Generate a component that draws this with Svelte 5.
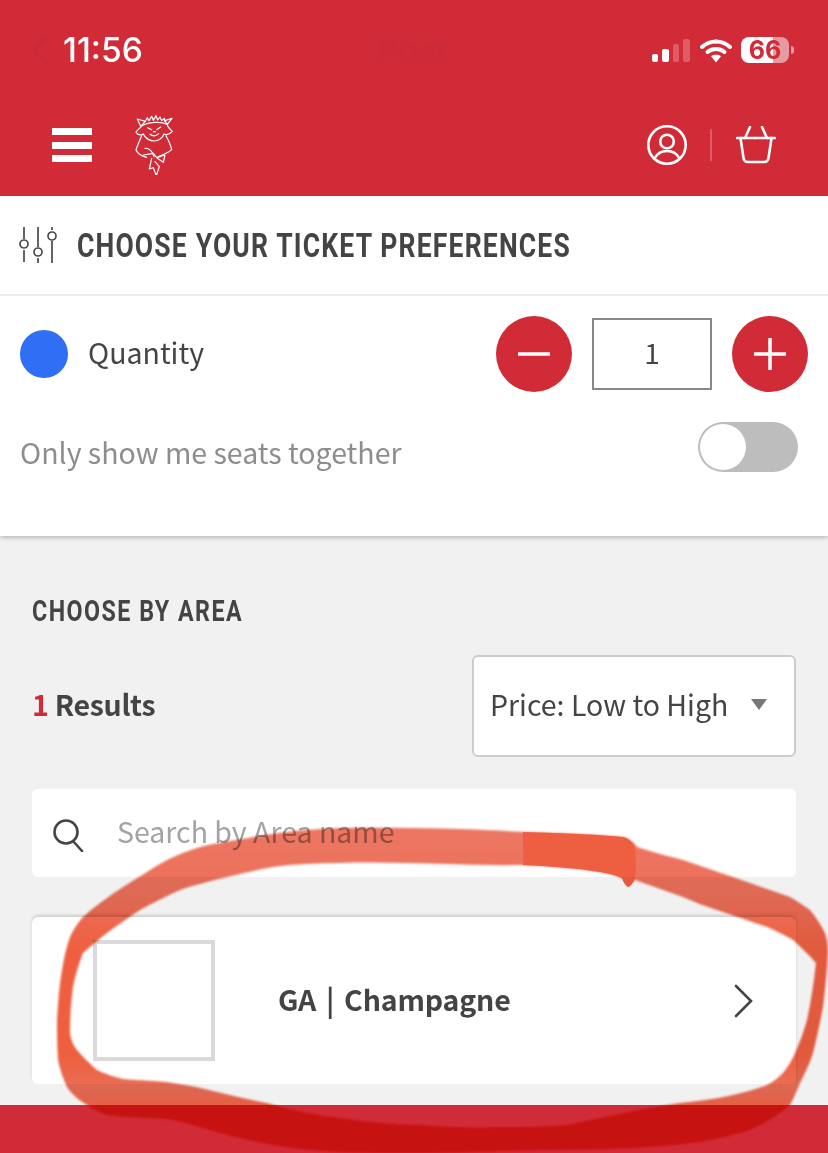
<script>
  let quantity = $state(1);
  let together = $state(false);
</script>

<div class="page">
  <header class="top">
    <div class="status">
      <div class="status-left">
        <svg class="ghost-back" width="18" height="30" viewBox="0 0 18 30"><path d="M15 3 3 15l12 12" fill="none" stroke="#c92b38" stroke-width="4" /></svg>
        <span class="time">11:56</span>
      </div>
      <span class="ghost-title">Post</span>
      <div class="status-right">
        <div class="signal">
          <i class="b1"></i><i class="b2"></i><i class="b3"></i><i class="b4"></i>
        </div>
        <svg class="wifi" width="32" height="25" viewBox="0 0 32 25">
          <path d="M16 3.500C10.500 3.500 5.800 5.600 2 9" fill="none" stroke="#fff" stroke-width="4" stroke-linecap="round" />
          <path d="M16 3.500c5.500 0 10.200 2.100 14 5.500" fill="none" stroke="#fff" stroke-width="4" stroke-linecap="round" />
          <path d="M7.500 14c2.400-2 5.200-3 8.500-3s6.100 1 8.500 3" fill="none" stroke="#fff" stroke-width="4" stroke-linecap="round" />
          <path d="M11 18.200c1.400-.9 3-1.400 5-1.400s3.600.5 5 1.400L16 24.500z" fill="#fff" />
        </svg>
        <div class="battery"><span class="level">66</span><span class="nub"></span></div>
      </div>
    </div>
    <nav class="nav">
      <div class="nav-left">
        <button class="burger" aria-label="Menu"><i></i><i></i><i></i></button>
        <svg class="logo" width="40" height="60" viewBox="45 30 120 180" fill="none" stroke="#fff" stroke-width="3.600" stroke-linejoin="round" stroke-linecap="round">
          <path d="M52 42 76 49 62 64zM156 40l-14 18-8-11z" />
          <path d="M76 49 82 38l5 9 8-13 5 12 8-14 5 13 7-9 5 11 8-7 1 8" />
          <path d="M64 64C60 70 50 76 48 82c6 8 14 10 22 5 5 13 20 21 32 21 13 0 26-9 30-21 8 4 18 0 25-8-8-7-14-12-15-21-20-9-58-8-78 6z" />
          <path d="M83 68l12 6M122 66l-12 8" />
          <path d="M90 88c8 6 18 6 26-2M100 80h6" />
          <path d="M65 92c-6 14-14 32-17 43 6 13 20 19 32 22M138 92c7 13 14 28 17 41-10 12-30 17-40 22" />
          <path d="M70 150l30-5 10 13 25-8-5 22-18-12" />
          <path d="M75 130c10-2 25 10 27 25M95 160l-7 32 12-4 9 24 9-27-13-15" />
        </svg>
      </div>
      <div class="nav-right">
        <svg width="42" height="42" viewBox="0 0 42 42" fill="none" stroke="#fff" stroke-width="2.600">
          <circle cx="21" cy="21" r="18.700" />
          <circle cx="21" cy="17.500" r="6.800" />
          <path d="M8.500 34.500c2.500-5 6.500-7.500 12.500-7.500s10 2.500 12.500 7.500" />
        </svg>
        <span class="sep"></span>
        <svg width="40" height="38" viewBox="0 0 40 38" fill="none" stroke="#fff" stroke-width="2.600" stroke-linecap="round" stroke-linejoin="round">
          <path d="M1 12h38" />
          <path d="M4.500 12l3 20q.6 4 4.500 4h16q3.900 0 4.500-4l3-20" />
          <path d="M14 1l-5 11M26 1l5 11" />
        </svg>
      </div>
    </nav>
  </header>

  <section class="prefs">
    <div class="prefs-title">
      <svg width="38" height="38" viewBox="0 0 38 38" fill="none" stroke="#4a4a4a" stroke-width="1.700">
        <path d="M5 1v12M5 24v12M19 1v20M19 32v5M33 1v3M33 15v22" />
        <circle cx="5" cy="18" r="4" />
        <circle cx="19" cy="26" r="4" />
        <circle cx="33" cy="10" r="4" />
      </svg>
      <h1><span>CHOOSE YOUR TICKET PREFERENCES</span></h1>
    </div>
    <div class="prefs-body">
      <div class="qty-row">
        <span class="dot"></span>
        <span class="qty-label">Quantity</span>
        <div class="stepper">
          <button class="round" aria-label="Less" onclick={() => (quantity = Math.max(1, quantity - 1))}>
            <svg width="34" height="34" viewBox="0 0 34 34"><path d="M1 17h32" stroke="#fff" stroke-width="3.500" /></svg>
          </button>
          <div class="qty-value">{quantity}</div>
          <button class="round" aria-label="More" onclick={() => quantity++}>
            <svg width="34" height="34" viewBox="0 0 34 34"><path d="M1 17h32M17 1v32" stroke="#fff" stroke-width="3.500" /></svg>
          </button>
        </div>
      </div>
      <div class="together-row">
        <span>Only show me seats together</span>
        <button class="toggle" aria-label="Seats together" onclick={() => (together = !together)}><i></i></button>
      </div>
    </div>
  </section>

  <main class="area">
    <h2><span>CHOOSE BY AREA</span></h2>
    <div class="results-row">
      <div class="results"><b>1</b> Results</div>
      <div class="select">
        <span>Price: Low to High</span>
        <i class="caret"></i>
      </div>
    </div>
    <div class="search">
      <svg width="34" height="34" viewBox="0 0 34 34" fill="none" stroke="#444" stroke-width="2.600" stroke-linecap="round">
        <circle cx="14" cy="14" r="11.500" />
        <path d="M21 23l9 10" />
      </svg>
      <span>Search by Area name</span>
    </div>
    <div class="card">
      <div class="thumb"></div>
      <div class="card-name">GA | Champagne</div>
      <svg width="20" height="34" viewBox="0 0 20 34" fill="none" stroke="#444" stroke-width="2.600" stroke-linecap="round"><path d="M2 2l15 15L2 32" /></svg>
    </div>
  </main>

  <footer class="bottom"></footer>

  <!-- marker ring drawn on top of the screenshot -->
  <svg class="scribble" viewBox="0 0 828 1153" width="828" height="1153">
    <defs>
      <linearGradient id="inkFade" gradientUnits="userSpaceOnUse" x1="0" y1="828" x2="0" y2="1153">
        <stop offset="0" stop-color="#ec7763" />
        <stop offset=".2" stop-color="#ec705a" />
        <stop offset=".38" stop-color="#ee5f40" />
        <stop offset=".7" stop-color="#ee5f40" />
        <stop offset=".8" stop-color="#ea6e55" />
        <stop offset=".85" stop-color="#f2664a" />
        <stop offset="1" stop-color="#f2664a" />
      </linearGradient>
    </defs>
    <path class="ink" fill="url(#inkFade)" fill-rule="evenodd" d="M523 832C480 829 410 827 340 828C310 829 280 832 253 837C232 841 213 843 197 848C187 851 177 855 167 860C152 868 138 878 123 887C108 897 95 906 83 917C77 924 73 930 70 937C66 948 64 958 62 970C59 987 58 1003 57 1020C57 1033 57 1047 58 1060C60 1070 63 1079 67 1087C71 1093 77 1099 87 1105C93 1109 100 1113 107 1115C128 1118 150 1117 173 1120C192 1124 209 1130 227 1135C242 1139 258 1142 273 1145C295 1149 318 1151 340 1152C390 1154 450 1153 500 1151C545 1150 590 1150 633 1148C655 1147 678 1145 700 1142C717 1139 734 1135 750 1130C762 1125 774 1118 790 1105C794 1098 797 1090 800 1083C805 1073 810 1063 813 1053C817 1038 820 1022 823 1007C825 990 827 970 828 953C828 945 827 939 825 933C821 925 816 917 810 910C803 905 797 901 790 897C771 890 752 884 733 877C716 871 700 866 683 860C668 856 652 852 637 847C635 843 630 839 623 837C590 834 556 833 523 832Z
    M70 1033C71 1040 73 1045 77 1050C83 1057 90 1064 97 1070C105 1074 114 1077 123 1079C140 1081 157 1080 173 1083C188 1085 202 1088 217 1092C234 1096 250 1100 267 1103C290 1110 315 1115 340 1118C368 1122 395 1125 420 1125C446 1127 473 1128 500 1127C523 1127 545 1127 567 1125C578 1123 589 1120 600 1118C627 1112 653 1107 680 1103C698 1101 716 1099 733 1095C745 1092 757 1089 767 1085C773 1082 778 1078 783 1073C788 1067 792 1060 795 1053C800 1042 804 1031 807 1020C811 1001 814 982 816 963C809 955 801 947 793 940C785 935 776 931 767 927C750 921 734 916 717 910C705 906 694 902 683 897C667 891 651 886 635 880L628 887C626 884 624 881 622 878C614 875 607 873 600 872C575 868 549 866 523 865C462 866 401 861 340 863C317 863 295 864 273 867C256 870 240 874 223 878C208 882 194 885 180 890C166 896 153 903 140 910C129 917 118 925 107 933C99 939 91 946 83 953C79 964 75 975 73 987C71 1002 70 1018 70 1033Z" />
    <path class="overlap" d="M523 832C556 833 590 834 623 837C630 839 633 843 635 848C636 858 636 868 635 878C633 883 631 886 628 887C625 885 623 881 622 878C615 875 607 873 600 872C575 868 549 866 523 865Z" />
  </svg>
</div>

<style>
  :global(body) {
    margin: 0;
    background: #f0f0f0;
  }

  .page {
    position: relative;
    width: 828px;
    height: 1153px;
    overflow: hidden;
    display: flex;
    flex-direction: column;
    background: #f1f1f1;
    color: #444;
    font-family: "Noto Sans CJK JP", "Noto Sans", sans-serif;
  }

  button {
    border: 0;
    padding: 0;
    background: none;
  }

  .top {
    height: 196px;
    flex: none;
    background: #d12b37;
    position: relative;
    z-index: 1;
  }

  .status {
    height: 100px;
    padding: 0 34px 0 33px;
    display: flex;
    align-items: center;
    justify-content: space-between;
    box-sizing: border-box;
  }

  .status-left {
    width: 120px;
    display: flex;
    align-items: center;
  }

  .ghost-back {
    flex: none;
    margin-right: -6px;
    margin-left: -2px;
  }

  .time {
    margin-left: 20px;
    color: #fff;
    font: 500 33.500px Inter, sans-serif;
  }

  .ghost-title {
    color: #cc2b38;
    font: 600 32px Inter, sans-serif;
    margin-left: 20px;
  }

  .status-right {
    display: flex;
    align-items: center;
  }

  .signal {
    display: flex;
    align-items: flex-end;
    gap: 4px;
    height: 24px;
  }

  .signal i {
    width: 6.500px;
    background: #fff;
    border-radius: 2px;
  }

  .signal .b1 { height: 8px; }
  .signal .b2 { height: 13px; }
  .signal .b3 { height: 18px; background: #dd5c66; }
  .signal .b4 { height: 23px; background: #dd5c66; }

  .wifi {
    margin-left: 10px;
  }

  .battery {
    position: relative;
    width: 48px;
    height: 26px;
    margin-left: 9px;
    margin-right: 5px;
    border-radius: 8px;
    background: linear-gradient(90deg, #fff 66%, #e69aa2 66%);
    display: flex;
    align-items: center;
    justify-content: center;
  }

  .level {
    color: #d12b37;
    font: 700 25px Inter, sans-serif;
  }

  .nub {
    position: absolute;
    left: 50px;
    top: 9px;
    width: 3px;
    height: 8px;
    border-radius: 0 3px 3px 0;
    background: #e69aa2;
  }

  .nav {
    height: 90px;
    padding: 0 52px;
    display: flex;
    align-items: center;
    justify-content: space-between;
  }

  .nav-left {
    display: flex;
    align-items: center;
    gap: 43px;
  }

  .burger {
    width: 40px;
    display: flex;
    flex-direction: column;
    gap: 6.500px;
  }

  .burger i {
    height: 7px;
    background: #fff;
  }

  .nav-right {
    display: flex;
    align-items: center;
    gap: 22px;
  }

  .sep {
    width: 2px;
    height: 32px;
    background: #dd5c66;
    margin-right: 2px;
  }

  .prefs {
    flex: none;
    height: 340px;
    background: #fff;
    box-shadow: 0 1px 5px rgba(0, 0, 0, .3);
  }

  .prefs-title {
    height: 100px;
    box-sizing: border-box;
    padding: 0 0 0 19px;
    display: flex;
    align-items: center;
    gap: 20px;
    border-bottom: 2px solid #ececec;
  }

  h1,
  h2 {
    margin: 0;
    font-family: Roboto, sans-serif;
    font-weight: 700;
    white-space: nowrap;
  }

  h1 span,
  h2 span {
    display: inline-block;
    transform-origin: left center;
  }

  h1 {
    font-size: 34px;
    line-height: 40px;
  }

  h1 span {
    transform: scaleX(.78);
    letter-spacing: 1.500px;
  }

  .prefs-body {
    padding: 20px 20px 0;
  }

  .qty-row {
    height: 76px;
    display: flex;
    align-items: center;
  }

  .dot {
    width: 48px;
    height: 48px;
    border-radius: 50%;
    background: #2f6ff5;
  }

  .qty-label {
    margin-left: 20px;
    padding-bottom: 6px;
    font-size: 28.500px;
  }

  .stepper {
    margin-left: auto;
    display: flex;
    align-items: center;
    gap: 20px;
  }

  .round {
    width: 76px;
    height: 76px;
    border-radius: 50%;
    background: #d12b37;
    display: flex;
    align-items: center;
    justify-content: center;
  }

  .qty-value {
    box-sizing: border-box;
    width: 120px;
    height: 72px;
    padding-bottom: 4px;
    border: 2.500px solid #888;
    display: flex;
    align-items: center;
    justify-content: center;
    font-size: 28px;
  }

  .together-row {
    margin-top: 29px;
    padding-right: 10px;
    display: flex;
    align-items: center;
    justify-content: space-between;
    color: #8d8d8d;
    font-size: 28.500px;
  }

  .together-row span {
    padding-top: 10px;
  }

  .toggle {
    width: 100px;
    height: 50px;
    border-radius: 25px;
    background: #bdbdbd;
    display: flex;
    align-items: center;
    padding: 2px;
    box-sizing: border-box;
  }

  .toggle i {
    width: 46px;
    height: 46px;
    border-radius: 50%;
    background: #fff;
  }

  .area {
    flex: 1;
    padding: 0 32px;
    display: flex;
    flex-direction: column;
  }

  h2 {
    margin-top: 57px;
    font-size: 30px;
    line-height: 36px;
  }

  h2 span {
    transform: scaleX(.775);
    letter-spacing: 1.900px;
  }

  .results-row {
    margin-top: 26px;
    display: flex;
    align-items: center;
    justify-content: space-between;
  }

  .results {
    padding-bottom: 6px;
    font-size: 28.500px;
    font-weight: 700;
    letter-spacing: -.3px;
  }

  .results b {
    color: #d12b37;
    font-weight: 700;
  }

  .select {
    box-sizing: border-box;
    width: 324px;
    height: 102px;
    padding: 0 27px 0 16px;
    border: 2px solid #ccc;
    border-radius: 6px;
    background: #fff;
    display: flex;
    align-items: center;
    justify-content: space-between;
    font-size: 28.500px;
  }

  .select span {
    padding-bottom: 6px;
  }

  .caret {
    width: 0;
    height: 0;
    border-left: 8px solid transparent;
    border-right: 8px solid transparent;
    border-top: 11px solid #777;
    margin-bottom: 4px;
  }

  .search {
    height: 88px;
    margin-top: 32px;
    padding-left: 20px;
    border-radius: 6px;
    background: #fff;
    display: flex;
    align-items: center;
    gap: 31px;
    color: #a3a3a3;
    font-size: 28.500px;
  }

  .search svg {
    margin-top: 3px;
  }

  .search span {
    padding-bottom: 6px;
  }

  .card {
    height: 167px;
    margin-top: 40px;
    padding: 0 42px 0 61px;
    border-radius: 6px;
    background: #fff;
    box-shadow: 0 -2px 3px rgba(0, 0, 0, .14);
    display: flex;
    align-items: center;
  }

  .thumb {
    box-sizing: border-box;
    width: 122px;
    height: 121px;
    border: 4px solid #dadada;
  }

  .card-name {
    flex: 1;
    margin-left: 63px;
    padding-bottom: 5px;
    font-size: 28.500px;
    font-weight: 700;
    letter-spacing: -.15px;
    word-spacing: 3.500px;
  }

  .bottom {
    height: 48px;
    flex: none;
    background: #d12b37;
  }

  .scribble {
    position: absolute;
    left: 0;
    top: 0;
    z-index: 2;
    pointer-events: none;
    mix-blend-mode: multiply;
  }

  .ink {
    filter: blur(.8px);
  }

  .overlap {
    fill: #ee5f42;
    filter: blur(.6px);
  }
</style>
